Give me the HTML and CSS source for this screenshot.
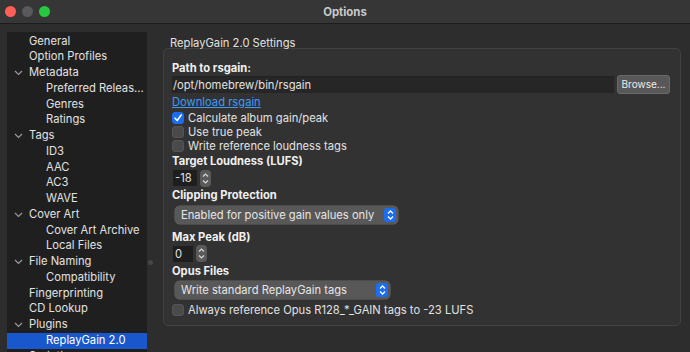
FILE: index.html
```html
<!DOCTYPE html>
<html>

<head>
    <link rel="stylesheet" href="styles.css">
</head>

<body>
    <div class="Window">
        <div class="TitleBar">
            <div class="Lights">
                <span class="Light Red"></span>
                <span class="Light Off"></span>
                <span class="Light Green"></span>
            </div>
            <div class="Title">Options</div>
        </div>
        <div class="Main">
            <div class="Tree">
                <div class="Row">General</div>
                <div class="Row">Option Profiles</div>
                <div class="Row"><span class="Arrow"><svg width="9" height="6" viewBox="0 0 9 6"><path d="M1 1l3.5 3.5L8 1" fill="none" stroke="#9a9a9a" stroke-width="1.2"/></svg></span>Metadata</div>
                <div class="Row Child">Preferred Releas...</div>
                <div class="Row Child">Genres</div>
                <div class="Row Child">Ratings</div>
                <div class="Row"><span class="Arrow"><svg width="9" height="6" viewBox="0 0 9 6"><path d="M1 1l3.5 3.5L8 1" fill="none" stroke="#9a9a9a" stroke-width="1.2"/></svg></span>Tags</div>
                <div class="Row Child">ID3</div>
                <div class="Row Child">AAC</div>
                <div class="Row Child">AC3</div>
                <div class="Row Child">WAVE</div>
                <div class="Row"><span class="Arrow"><svg width="9" height="6" viewBox="0 0 9 6"><path d="M1 1l3.5 3.5L8 1" fill="none" stroke="#9a9a9a" stroke-width="1.2"/></svg></span>Cover Art</div>
                <div class="Row Child">Cover Art Archive</div>
                <div class="Row Child">Local Files</div>
                <div class="Row"><span class="Arrow"><svg width="9" height="6" viewBox="0 0 9 6"><path d="M1 1l3.5 3.5L8 1" fill="none" stroke="#9a9a9a" stroke-width="1.2"/></svg></span>File Naming</div>
                <div class="Row Child">Compatibility</div>
                <div class="Row">Fingerprinting</div>
                <div class="Row">CD Lookup</div>
                <div class="Row"><span class="Arrow"><svg width="9" height="6" viewBox="0 0 9 6"><path d="M1 1l3.5 3.5L8 1" fill="none" stroke="#9a9a9a" stroke-width="1.2"/></svg></span>Plugins</div>
                <div class="Row Child Selected">ReplayGain 2.0</div>
                <div class="Row">Scripting</div>
            </div>
            <div class="Splitter"><span class="Dot"></span></div>
            <div class="Content">
                <div class="GroupTitle">ReplayGain 2.0 Settings</div>
                <div class="Group">
                    <div class="Label LPath">Path to rsgain:</div>
                    <div class="PathRow">
                        <div class="PathInput">/opt/homebrew/bin/rsgain</div>
                        <div class="Button">Browse...</div>
                    </div>
                    <div class="Link"><span>Download rsgain</span></div>
                    <div class="Check"><span class="Box On"><svg width="10" height="10" viewBox="0 0 10 10"><path d="M2 5.2l2.2 2.3L8.2 2" fill="none" stroke="#fff" stroke-width="1.6" stroke-linecap="round" stroke-linejoin="round"/></svg></span>Calculate album gain/peak</div>
                    <div class="Check"><span class="Box"></span>Use true peak</div>
                    <div class="Check"><span class="Box"></span>Write reference loudness tags</div>
                    <div class="Label LTarget">Target Loudness (LUFS)</div>
                    <div class="SpinRow S1">
                        <div class="SpinInput W18">-18</div>
                        <div class="Stepper"><svg width="9" height="15" viewBox="0 0 9 15"><path d="M2 5.5l2.5-2.5 2.5 2.5M2 9.5l2.5 2.5 2.5-2.5" fill="none" stroke="#d8d8d8" stroke-width="1.2"/></svg></div>
                    </div>
                    <div class="Label LClip">Clipping Protection</div>
                    <div class="ComboRow C1">
                        <div class="Combo W1">Enabled for positive gain values only<span class="ComboBtn"><svg width="9" height="14" viewBox="0 0 9 14"><path d="M2 5.5l2.5-2.5 2.5 2.5M2 8.5l2.5 2.5 2.5-2.5" fill="none" stroke="#fff" stroke-width="1.3"/></svg></span></div>
                    </div>
                    <div class="Label LPeak">Max Peak (dB)</div>
                    <div class="SpinRow S2">
                        <div class="SpinInput W0">0</div>
                        <div class="Stepper"><svg width="9" height="15" viewBox="0 0 9 15"><path d="M2 5.5l2.5-2.5 2.5 2.5M2 9.5l2.5 2.5 2.5-2.5" fill="none" stroke="#d8d8d8" stroke-width="1.2"/></svg></div>
                    </div>
                    <div class="Label LOpus">Opus Files</div>
                    <div class="ComboRow C2">
                        <div class="Combo W2">Write standard ReplayGain tags<span class="ComboBtn"><svg width="9" height="14" viewBox="0 0 9 14"><path d="M2 5.5l2.5-2.5 2.5 2.5M2 8.5l2.5 2.5 2.5-2.5" fill="none" stroke="#fff" stroke-width="1.3"/></svg></span></div>
                    </div>
                    <div class="Check Last"><span class="Box"></span>Always reference Opus R128_*_GAIN tags to -23 LUFS</div>
                </div>
            </div>
        </div>
    </div>
</body>

</html>
```

FILE: styles.css
```css
body {
    margin: 0;
    background-color: #2d2d2d;
    font-family: Inter, "Liberation Sans", sans-serif;
    font-size: 11.2px;
    color: #e2e2e2;
    overflow: hidden;
}

.Window {
    width: 690px;
    height: 352px;
    overflow: hidden;
}

.TitleBar {
    height: 24px;
    background-color: #363636;
    border-bottom: 1px solid #1c1c1c;
    box-sizing: border-box;
    display: flex;
    align-items: center;
    position: relative;
}

.Lights {
    display: flex;
    gap: 6px;
    padding-left: 5px;
}

.Light {
    width: 11px;
    height: 11px;
    border-radius: 50%;
}

.Light.Red {
    background-color: #fe5f57;
}

.Light.Off {
    background-color: #59595b;
}

.Light.Green {
    background-color: #28c840;
}

.Title {
    position: absolute;
    left: 0;
    right: 0;
    text-align: center;
    font-weight: 700;
    font-size: 11.4px;
    color: #c9c9c9;
}

.Main {
    display: flex;
    padding: 8px 0 0 7px;
    height: 328px;
    box-sizing: border-box;
}

/* tree */
.Tree {
    width: 140px;
    flex-shrink: 0;
    background-color: #1f1f1f;
    padding-top: 1.5px;
    box-sizing: border-box;
    overflow: hidden;
}

.Row {
    height: 15.75px;
    line-height: 15.75px;
    padding-left: 22px;
    position: relative;
    white-space: nowrap;
}

.Row.Child {
    padding-left: 39px;
}

.Row.Selected {
    background-color: #1858cc;
    color: #fff;
}

.Arrow {
    position: absolute;
    left: 7px;
    top: 5px;
    line-height: 0;
}

.Splitter {
    width: 16px;
    flex-shrink: 0;
    display: flex;
    justify-content: flex-start;
    padding-top: 228px;
    box-sizing: border-box;
}

.Dot {
    width: 5px;
    height: 5px;
    border-radius: 50%;
    background-color: #474747;
    margin-left: 1px;
}

/* settings */
.Content {
    width: 518px;
    flex-shrink: 0;
}

.GroupTitle {
    padding: 4px 0 0 7px;
    line-height: 14px;
}

.Group {
    margin-top: -2px;
    height: 278px;
    box-sizing: border-box;
    border: 1px solid #414141;
    border-radius: 5px;
    background-color: #323232;
    padding: 12px 10px 0 8px;
}

.Label {
    font-weight: 700;
    color: #f0f0f0;
}

.LPath {
    height: 14px;
    line-height: 14px;
}

.PathRow {
    display: flex;
    align-items: center;
    height: 18px;
}

.PathInput {
    width: 442px;
    height: 17px;
    line-height: 17px;
    background-color: #262626;
    border-top: 1px solid #222;
    box-sizing: border-box;
    padding-left: 1px;
}

.Button {
    margin-left: 3px;
    width: 53px;
    height: 19px;
    line-height: 17px;
    box-sizing: border-box;
    border: 1px solid #6a6a6a;
    border-radius: 3px;
    background-color: #585858;
    text-align: center;
    font-size: 10px;
    color: #ececec;
}

.Link {
    height: 18px;
    line-height: 18px;
}

.Link span {
    color: #3c9af8;
    text-decoration: underline;
}

.Check {
    display: flex;
    align-items: center;
    height: 14px;
}

.Check.Last {
    height: 22px;
}

.Box {
    width: 12px;
    height: 12px;
    box-sizing: border-box;
    border-radius: 3px;
    background-color: #4a4a4a;
    border: 1px solid #555;
    margin-right: 4px;
    display: flex;
    align-items: center;
    justify-content: center;
}

.Box.On {
    background-color: #1a6df0;
    border-color: #1a6df0;
}

.LTarget {
    height: 16px;
    line-height: 16px;
}

.SpinRow {
    display: flex;
    align-items: center;
    padding-left: 1px;
}

.SpinRow.S1 {
    height: 18px;
}

.SpinRow.S2 {
    height: 17px;
}

.SpinInput {
    height: 16px;
    line-height: 16px;
    background-color: #1e1e1e;
    padding-left: 2px;
    box-sizing: border-box;
}

.SpinInput.W18 {
    width: 24px;
}

.SpinInput.W0 {
    width: 20px;
}

.Stepper {
    margin-left: 3px;
    width: 11px;
    height: 17px;
    border-radius: 4px;
    background-color: #5a5a5a;
    display: flex;
    align-items: center;
    justify-content: center;
}

.LClip {
    height: 16px;
    line-height: 16px;
}

.ComboRow {
    display: flex;
    align-items: center;
    padding-left: 3px;
}

.ComboRow.C1 {
    height: 24px;
}

.ComboRow.C2 {
    height: 19px;
}

.Combo {
    height: 18px;
    line-height: 18px;
    border-radius: 5px;
    background-color: #585858;
    box-shadow: 0 0 0 0.5px #666;
    padding-left: 6px;
    box-sizing: border-box;
    position: relative;
    color: #e6e6e6;
}

.Combo.W1 {
    width: 223px;
}

.Combo.W2 {
    width: 215px;
}

.ComboBtn {
    position: absolute;
    right: 2px;
    top: 2px;
    width: 12px;
    height: 14px;
    border-radius: 3px;
    background-color: #1c6ef0;
    display: flex;
    align-items: center;
    justify-content: center;
}

.LPeak {
    height: 18px;
    line-height: 20px;
}

.LOpus {
    height: 18px;
    line-height: 18px;
}
```
